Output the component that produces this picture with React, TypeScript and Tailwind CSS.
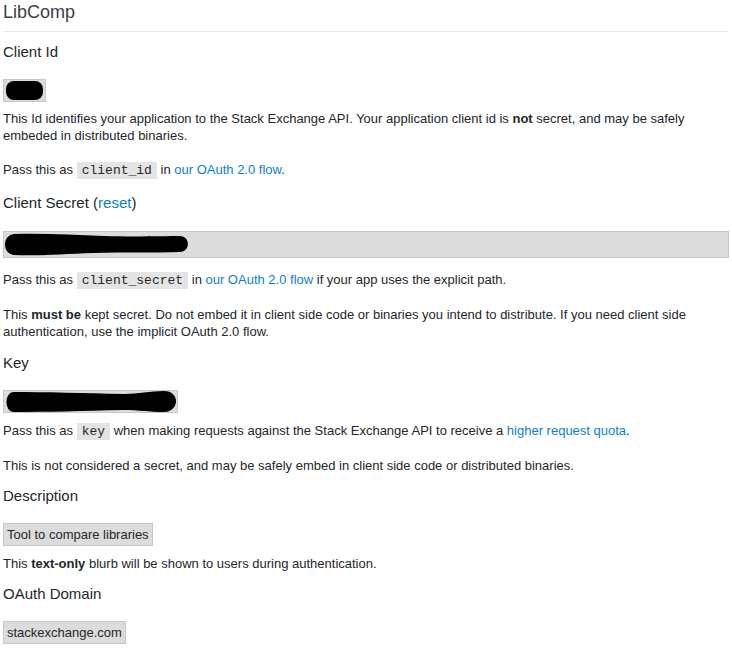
import React from "react";

const Code = ({ children }: { children: React.ReactNode }) => (
  <code className="bg-[#e4e4e4] px-[5px] py-[1px] font-['Liberation_Mono',monospace] text-[13px] text-[#242729]">
    {children}
  </code>
);

const A = ({ children }: { children: React.ReactNode }) => (
  <a className="text-[#0a7fd1]" href="#">
    {children}
  </a>
);

const H = ({ children, mt }: { children: React.ReactNode; mt: string }) => (
  <h2 className={`${mt} text-[15px] leading-[20px] text-[#242729]`}>{children}</h2>
);

export default function App() {
  return (
    <div className="w-[732px] bg-white px-[3px] font-['Liberation_Sans',Arial,sans-serif] text-[13px] leading-[17px] text-[#242729]">
      <h1 className="border-b border-[#e4e6e8] pt-[2px] pb-[9px] text-[18px] leading-[20px] text-[#3b4045]">LibComp</h1>

      <H mt="mt-[10px]">Client Id</H>
      <div className="mt-[17px] h-[23px] w-[43px] border border-[#c8c8c8] bg-[#dcdcdc]">
        <svg width="41" height="21" viewBox="0 0 41 21">
          <rect x="2" y="1" width="37" height="19" rx="8" fill="#000" />
        </svg>
      </div>
      <p className="mt-[8px]">
        This Id identifies your application to the Stack Exchange API. Your application client id is <b>not</b> secret, and may be safely embeded in distributed binaries.
      </p>
      <p className="mt-[17px]">
        Pass this as <Code>client_id</Code> in <A>our OAuth 2.0 flow</A>.
      </p>

      <H mt="mt-[14px]">
        Client Secret (<A>reset</A>)
      </H>
      <div className="mt-[18px] h-[27px] w-[726px] border border-[#c8c8c8] bg-[#dcdcdc]">
        <svg width="190" height="25" viewBox="0 0 190 25">
          <path
            d="M10 2 C40 1 70 3 100 4 C130 5 160 4 176 4 C186 4 187 19 176 20 C150 21 120 20 90 21 C60 22 35 24 10 23 C-2 22 -2 3 10 2 Z"
            fill="#000"
          />
        </svg>
      </div>
      <p className="mt-[13px]">
        Pass this as <Code>client_secret</Code> in <A>our OAuth 2.0 flow</A> if your app uses the explicit path.
      </p>
      <p className="mt-[17px]">
        This <b>must be</b> kept secret. Do not embed it in client side code or binaries you intend to distribute. If you need client side authentication, use the implicit OAuth 2.0 flow.
      </p>

      <H mt="mt-[13px]">Key</H>
      <div className="mt-[17px] h-[23px] w-[175px] border border-[#c8c8c8] bg-[#dcdcdc]">
        <svg width="173" height="21" viewBox="0 0 173 21">
          <path
            d="M10 1 C40 1 80 2 120 3 C135 3 145 0 160 0 C176 0 176 20 160 21 C145 21 135 19 120 19 C80 20 40 21 10 21 C0 21 0 1 10 1 Z"
            fill="#000"
          />
        </svg>
      </div>
      <p className="mt-[9px]">
        Pass this as <Code>key</Code> when making requests against the Stack Exchange API to receive a <A>higher request quota</A>.
      </p>
      <p className="mt-[17px]">This is not considered a secret, and may be safely embed in client side code or distributed binaries.</p>

      <H mt="mt-[12px]">Description</H>
      <div className="mt-[17px] inline-block h-[23px] border border-[#c8c8c8] bg-[#dcdcdc] px-[3px] leading-[21px]">
        Tool to compare libraries
      </div>
      <p className="mt-[9px]">
        This <b>text-only</b> blurb will be shown to users during authentication.
      </p>

      <H mt="mt-[12px]">OAuth Domain</H>
      <div className="mt-[17px] inline-block h-[23px] border border-[#c8c8c8] bg-[#dcdcdc] px-[3px] leading-[21px]">
        stackexchange.com
      </div>
      <div className="h-[4px]" />
    </div>
  );
}
